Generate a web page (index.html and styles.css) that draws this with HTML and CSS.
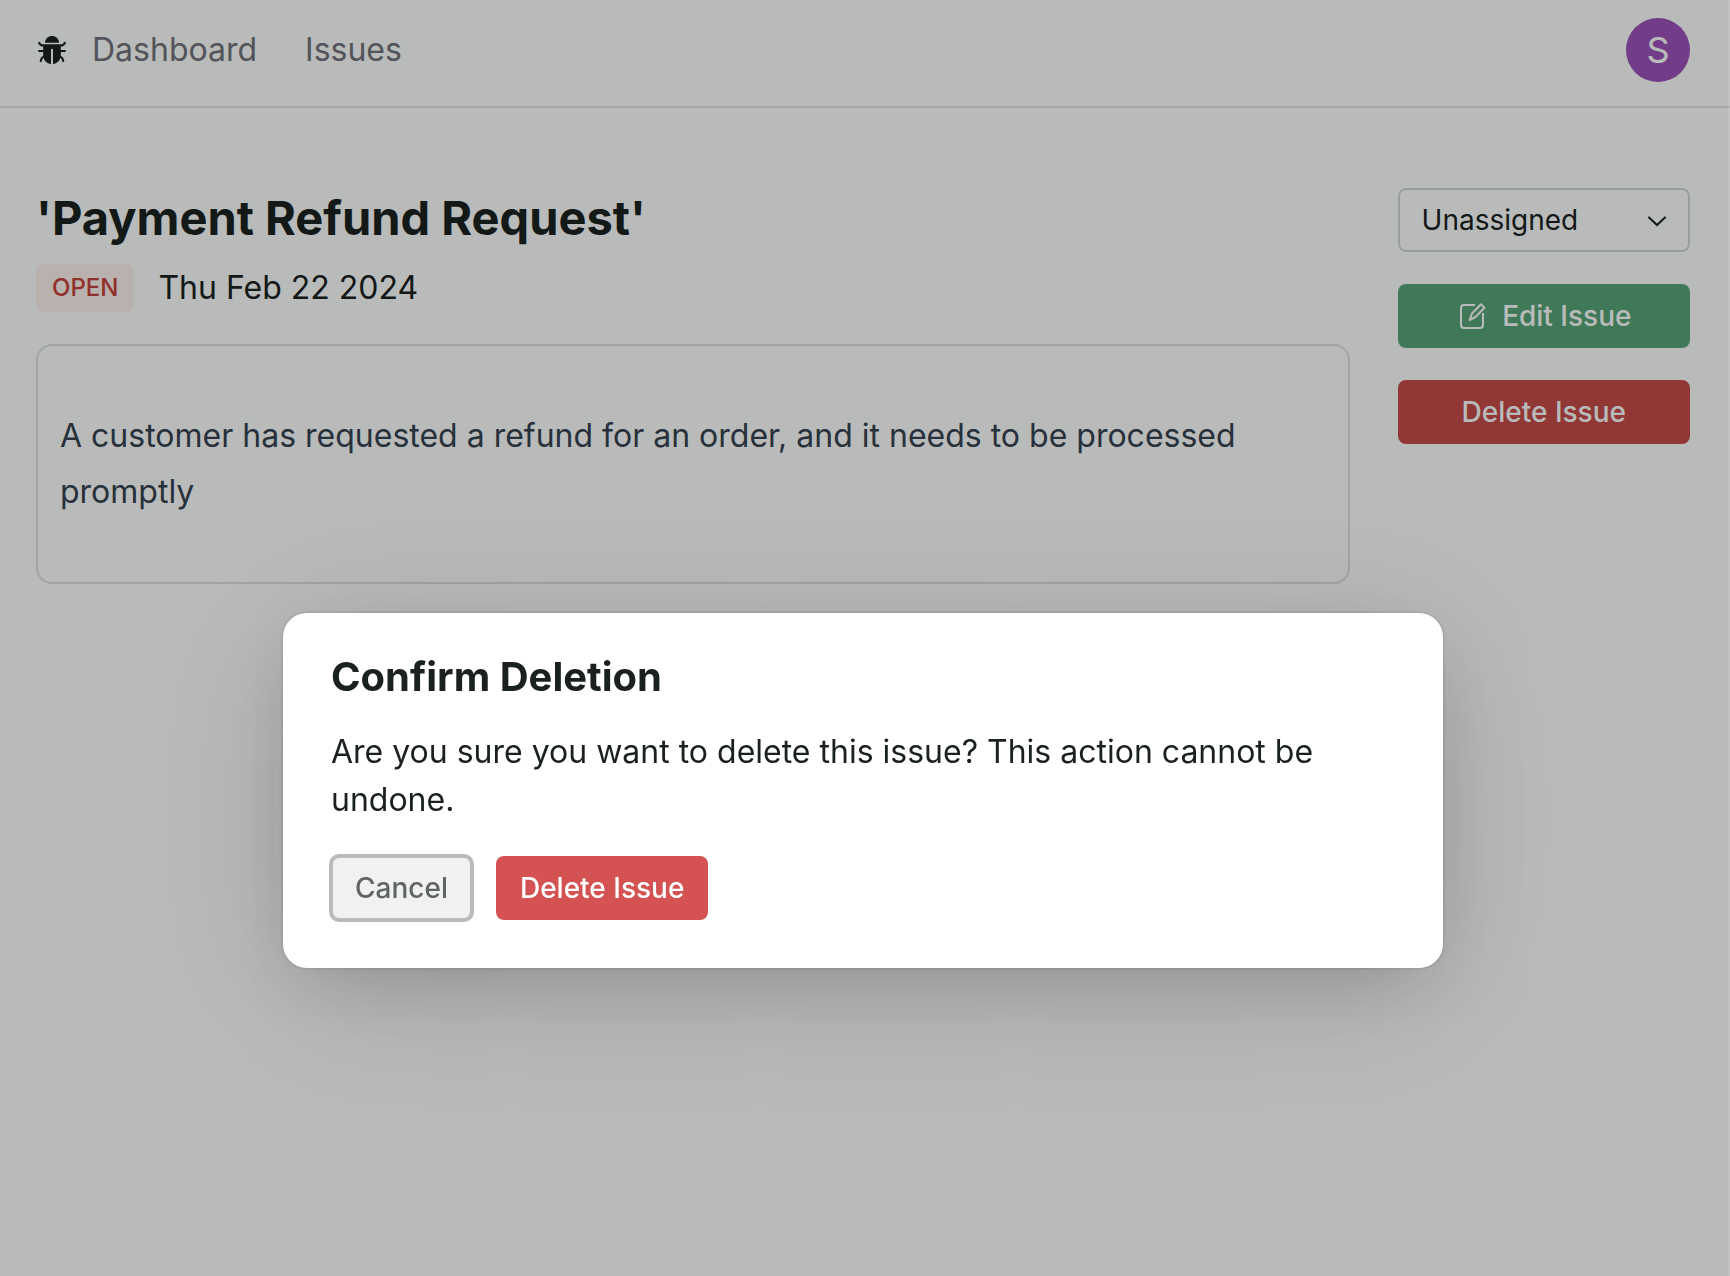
FILE: index.html
```html
<!DOCTYPE html>
<html lang="en">
<head>
<meta charset="utf-8">
<title>Issue Tracker</title>
<link rel="stylesheet" href="styles.css">
</head>
<body>
<header class="topbar">
  <nav class="nav">
    <a class="logo" href="#" aria-label="Home">
      <svg viewBox="-2 -2 32 32" width="32" height="32" fill="currentColor"><path d="M7 6.8C7-2.2 21-2.2 21 6.8z"/><path d="M5.2 8.6H22.8V19C22.8 24 19.5 27.5 15 28V13H13V28C8.500 27.500 5.200 24 5.200 19z"/><path d="M1 6Q1.500 9.600 6 9.600H22Q26.500 9.600 27 6M.3 15H6M22 15H27.700M6.500 20.500Q2.800 21.500 2.700 26M21.500 20.500Q25.200 21.500 25.300 26" fill="none" stroke="currentColor" stroke-width="2"/></svg>
    </a>
    <ul class="links">
      <li><a href="#">Dashboard</a></li>
      <li><a href="#">Issues</a></li>
    </ul>
  </nav>
  <button class="avatar" type="button" aria-label="Account">S</button>
</header>
<main class="issue">
  <article class="details">
    <h1 class="title">'Payment Refund Request'</h1>
    <div class="meta"><span class="badge">OPEN</span><time datetime="2024-02-22">Thu Feb 22 2024</time></div>
    <div class="card"><p>A customer has requested a refund for an order, and it needs to be processed promptly</p></div>
  </article>
  <aside class="actions">
    <div class="assignee">
      <select class="select" aria-label="Assignee"><option>Unassigned</option></select>
      <svg class="chevron" viewBox="0 0 15 15" width="30" height="30" fill="none" stroke="currentColor" stroke-linecap="round"><path d="M3.500 6.200 7.500 10 11.500 6.200"/></svg>
    </div>
    <button class="button green" type="button">
      <svg viewBox="-2 0 30 30" width="30" height="30" fill="none" stroke="currentColor" stroke-width="2" stroke-linejoin="round"><path d="M17 4H6Q3 4 3 7V24Q3 27 6 27H22Q25 27 25 24V12"/><path d="M11.500 19 14 12.500 23 3.300 26.500 6.700 17.500 16z"/></svg>
      Edit Issue
    </button>
    <button class="button red" type="button">Delete Issue</button>
  </aside>
</main>
<div class="overlay">
  <section class="dialog" role="alertdialog" aria-modal="true" aria-labelledby="dialog-title" aria-describedby="dialog-text">
    <h2 class="dialog-title" id="dialog-title">Confirm Deletion</h2>
    <p class="dialog-text" id="dialog-text">Are you sure you want to delete this issue? This action cannot be undone.</p>
    <div class="dialog-actions">
      <button class="button cancel" type="button">Cancel</button>
      <button class="button danger" type="button">Delete Issue</button>
    </div>
  </section>
</div>
</body>
</html>
```
FILE: styles.css
```css
* { box-sizing: border-box; }
body {
  margin: 0;
  min-height: 100vh;
  font: 32px/48px Inter, sans-serif;
  color: #1a211e;
  background: #fff;
}
h1, h2, p, ul { margin: 0; padding: 0; }
button, select { font: inherit; }
svg { display: block; flex: none; }

.topbar {
  display: flex;
  align-items: center;
  justify-content: space-between;
  height: 108px;
  padding: 0 40px 6px 36px;
  border-bottom: 2px solid #e4e4eb;
}
.nav { display: flex; align-items: center; gap: 24px; }
.logo { color: inherit; }
.links { display: flex; gap: 48px; list-style: none; }
.links a { color: #71717a; text-decoration: none; }
.avatar {
  width: 64px;
  height: 64px;
  padding: 0;
  border: 0;
  border-radius: 50%;
  background: #9d50ba;
  color: #fff;
  font-size: 36px;
}

.issue {
  display: grid;
  grid-template-columns: repeat(5, 1fr);
  gap: 48px;
  padding: 80px 40px 80px 36px;
}
.details { grid-column: span 4; }
.title { font-size: 47px; line-height: 60px; font-weight: 700; }
.meta { display: flex; align-items: center; gap: 24px; margin: 16px 0 32px; }
.badge {
  padding: 0 16px;
  border-radius: 8px;
  background: #fff1ef;
  color: #c8403a;
  font-size: 24px;
  font-weight: 500;
}
.card {
  padding: 62px 22px;
  border: 2px solid #dfe1e0;
  border-radius: 16px;
  color: #374151;
  line-height: 56px;
}

.actions { display: flex; flex-direction: column; gap: 32px; }
.assignee { display: grid; align-items: center; }
.select, .chevron { grid-area: 1 / 1; }
.select {
  appearance: none;
  width: 100%;
  height: 64px;
  padding: 0 22px;
  border: 2px solid #d5d8d7;
  border-radius: 8px;
  background: transparent;
  color: inherit;
  font-size: 28px;
}
.chevron { justify-self: end; margin-right: 18px; pointer-events: none; }
.button {
  display: flex;
  align-items: center;
  justify-content: center;
  gap: 16px;
  height: 64px;
  padding: 0 24px;
  border: 0;
  border-radius: 8px;
  color: #fff;
  font-size: 28px;
  font-weight: 500;
}
.green { background: #58a577; }
.red { background: #c84949; }

.overlay {
  position: fixed;
  inset: 0;
  display: flex;
  align-items: flex-start;
  justify-content: center;
  padding: 613px 2px 0 0;
  border-right: 2px solid rgba(255, 255, 255, 0.1);
  background: rgba(0, 7, 4, 0.275);
}
.dialog {
  width: 100%;
  max-width: 1160px;
  padding: 36px 48px 48px;
  border-radius: 24px;
  background: #fff;
  box-shadow: 0 0 0 2px rgba(0, 0, 0, 0.06), 0 24px 160px rgba(0, 12, 6, 0.16), 0 24px 64px -24px rgba(0, 32, 8, 0.18);
}
.dialog-title { margin-bottom: 23px; font-size: 40px; line-height: 56px; font-weight: 700; }
.dialog-text { margin-bottom: 32px; }
.dialog-actions { display: flex; gap: 24px; }
.cancel { background: #f1f1f1; color: #5f6563; outline: 4px solid #b9bbba; outline-offset: -2px; }
.danger { background: #d45252; }
```
